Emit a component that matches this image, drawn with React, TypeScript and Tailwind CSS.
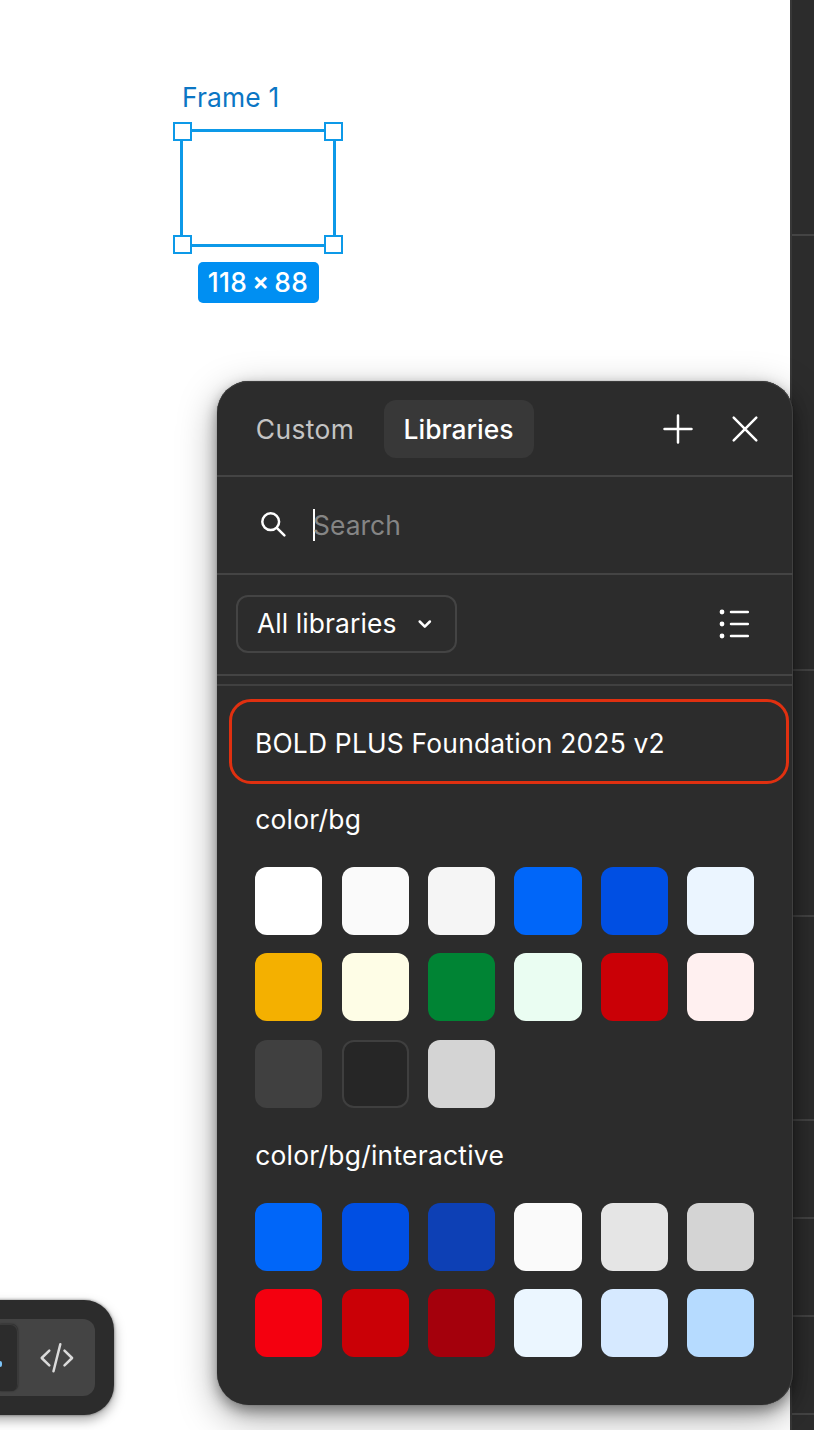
import type { ReactNode } from "react";

type Swatch = { name: string; className: string };

const groups: { title: string; swatches: Swatch[] }[] = [
  {
    title: "color/bg",
    swatches: [
      { name: "default", className: "bg-white" },
      { name: "subtle", className: "bg-[#fafafa]" },
      { name: "muted", className: "bg-[#f5f5f5]" },
      { name: "brand", className: "bg-[#0066f9]" },
      { name: "brand-strong", className: "bg-[#004fe3]" },
      { name: "brand-subtle", className: "bg-[#ebf5ff]" },
      { name: "warning", className: "bg-[#f4b000]" },
      { name: "warning-subtle", className: "bg-[#fefde6]" },
      { name: "success", className: "bg-[#008434]" },
      { name: "success-subtle", className: "bg-[#eafdf2]" },
      { name: "danger", className: "bg-[#ca0006]" },
      { name: "danger-subtle", className: "bg-[#fff0f0]" },
      { name: "inverse", className: "bg-[#404040]" },
      { name: "inverse-strong", className: "bg-[#262626] border-2 border-[#3f3f3f]" },
      { name: "disabled", className: "bg-[#d4d4d4]" },
    ],
  },
  {
    title: "color/bg/interactive",
    swatches: [
      { name: "primary", className: "bg-[#0066f9]" },
      { name: "primary-hover", className: "bg-[#004fe3]" },
      { name: "primary-pressed", className: "bg-[#0d40b5]" },
      { name: "secondary", className: "bg-[#fafafa]" },
      { name: "secondary-hover", className: "bg-[#e5e5e5]" },
      { name: "secondary-pressed", className: "bg-[#d4d4d4]" },
      { name: "danger", className: "bg-[#f4000f]" },
      { name: "danger-hover", className: "bg-[#ca0006]" },
      { name: "danger-pressed", className: "bg-[#a4000c]" },
      { name: "selected", className: "bg-[#ebf6ff]" },
      { name: "selected-hover", className: "bg-[#d6e9ff]" },
      { name: "selected-pressed", className: "bg-[#b6dbff]" },
    ],
  },
];

/* Heights of the inspector sections behind the picker */
const sections = [
  "h-[236px]",
  "h-[435px]",
  "h-[246px]",
  "h-[204px]",
  "h-[98px]",
  "h-[98px]",
  "h-[98px]",
];

function Icon({ children, className }: { children: ReactNode; className: string }) {
  return (
    <svg
      className={className}
      fill="none"
      stroke="currentColor"
      strokeWidth="2.5"
      strokeLinecap="round"
      strokeLinejoin="round"
      aria-hidden="true"
    >
      {children}
    </svg>
  );
}

function Handle({ className }: { className: string }) {
  return <span className={`absolute size-[19px] border-2 border-[#0d99e8] bg-white ${className}`} />;
}

/* Selected frame on the canvas */
function SelectedFrame() {
  return (
    <div className="absolute left-[180px] top-[81px] flex w-[156px] flex-col items-center">
      <span className="w-full pl-0.5 text-[26.4px] leading-8 tracking-[0.15px] text-[#0b76c4]">Frame 1</span>
      <div className="relative mt-4 h-[118px] w-full border-[3px] border-[#0d99e8]">
        <Handle className="-left-2.5 -top-2.5" />
        <Handle className="-right-2.5 -top-2.5" />
        <Handle className="-left-2.5 -bottom-2.5" />
        <Handle className="-right-2.5 -bottom-2.5" />
      </div>
      <span className="mt-[15px] flex h-[41px] w-[121px] items-center justify-center gap-[5px] rounded-[5px] bg-[#008ff2] text-[26.4px] font-medium tracking-[0.3px] whitespace-nowrap text-white">
        <span>118</span>
        <span className="pb-0.5 text-[25px] font-semibold">×</span>
        <span>88</span>
      </span>
    </div>
  );
}

function SwatchGroup({ title, swatches }: { title: string; swatches: Swatch[] }) {
  return (
    <section>
      <h3 className="flex h-[58px] items-center text-[26.4px] tracking-[0.25px]">{title}</h3>
      <div className="mt-[18px] grid grid-cols-[repeat(6,67.2px)] gap-x-[19.2px] gap-y-[18.4px]">
        {swatches.map((s) => (
          <button key={s.name} aria-label={s.name} className={`h-[68px] rounded-[12px] ${s.className}`} />
        ))}
      </div>
    </section>
  );
}

function ColorPicker() {
  return (
    <div className="absolute left-[217px] top-[381px] flex h-[1024px] w-[576px] flex-col overflow-hidden rounded-[32px] bg-[#2c2c2c] text-white shadow-[0_12px_38px_rgba(0,0,0,0.35),0_6px_14px_rgba(0,0,0,0.38),0_0_1px_rgba(0,0,0,0.5),inset_-1px_0_0_#404040,inset_0_1px_0_#3c3c3c]">
      <header className="flex h-24 shrink-0 items-center border-b-[2.4px] border-[#444444] pl-5 pt-0.5 text-[26.4px]">
        <button className="w-[136px] pt-0.5 text-center tracking-[0.4px] text-[#c4c4c4]">Custom</button>
        <button className="ml-[11px] flex h-[58px] w-[150px] items-center justify-center rounded-[12px] bg-[#383838] pr-px pt-0.5 font-medium">
          Libraries
        </button>
        <button className="ml-[129px]" aria-label="Add">
          <Icon className="size-[30px]">
            <path d="M15 1.5v27M1.5 15h27" />
          </Icon>
        </button>
        <button className="ml-[37px]" aria-label="Close">
          <Icon className="size-[30px]">
            <path d="m3.7 3.7 22.6 22.6m0-22.6-22.6 22.6" />
          </Icon>
        </button>
      </header>

      <div className="flex h-[98px] shrink-0 items-center border-b-2 border-[#444444] pl-[43px]">
        <Icon className="size-[28px]">
          <circle cx="10.7" cy="10.7" r="8.4" />
          <path d="m16.8 16.8 7.6 7.6" />
        </Icon>
        <span className="ml-[25px] h-8 w-0.5 bg-white" />
        <span className="-ml-0.5 pt-0.5 text-[26.4px] tracking-[0.05px] text-[#858585]">Search</span>
      </div>

      <div className="flex h-[101px] shrink-0 items-center justify-between border-b-2 border-[#444444] pb-0.5 pl-[19px] pr-[43px]">
        <button className="flex h-[58px] w-[221px] items-center rounded-[12px] border-2 border-[#444444] pl-[19px] text-[26.4px] tracking-[0.1px]">
          All libraries
          <Icon className="ml-[21px] size-4">
            <path d="m2.7 5.5 5.1 5.2 5.1-5.2" />
          </Icon>
        </button>
        <button aria-label="Show as list">
          <Icon className="h-[32px] w-[32px]">
            <path d="M13 4h16.8M13 16h16.8M13 28h16.8" />
            <path d="M4 4h.01M4 16h.01M4 28h.01" strokeWidth="4.8" />
          </Icon>
        </button>
      </div>

      <div className="mt-2 flex grow flex-col border-t-2 border-[#404040] pt-[13px]">
        <h2 className="ml-3 mr-1 flex h-[85px] shrink-0 items-center rounded-[22px] border-[3px] border-[#e03010] pt-[5px] pl-[23px] text-[26.4px] tracking-[0.2px]">
          BOLD PLUS Foundation 2025 v2
        </h2>
        <div className="flex flex-col gap-[19px] pl-[38.2px] pt-[7px]">
          {groups.map((g) => (
            <SwatchGroup key={g.title} {...g} />
          ))}
        </div>
      </div>
    </div>
  );
}

function Toolbar() {
  return (
    <div className="absolute -left-10 top-[1300px] flex h-[115px] w-[154px] items-center rounded-[30px] bg-[#2c2c2c] pl-10 shadow-[0_5px_12px_rgba(0,0,0,0.35),0_0_3px_rgba(0,0,0,0.5)]">
      <div className="flex h-[77px] w-[95px] items-center rounded-r-[12px] bg-[#444444]">
        <button
          aria-label="Design"
          className="flex h-[67px] w-[18px] items-center rounded-r-[7px] bg-[#2c2c2c] pt-3 shadow-[0_0_2px_rgba(0,0,0,0.5),inset_-1px_1px_0_#3a3a3a]"
        >
          <span className="h-[6px] w-[2px] rounded-r-full bg-[#7cc4f8]" />
        </button>
        <button aria-label="Dev mode" className="ml-[21px] text-[#dadada]">
          <Icon className="h-[32px] w-[36px]">
            <path d="m10.3 8.6-7.6 7.4 7.6 7.4M25.5 8.6l7.6 7.4-7.6 7.4M21.3 2.3l-6.8 27" />
          </Icon>
        </button>
      </div>
    </div>
  );
}

export default function App() {
  return (
    <main className="relative flex h-[1430px] w-[814px] justify-end overflow-hidden bg-white font-['Inter',sans-serif]">
      <aside className="w-6 border-l-2 border-[#383838] bg-[#2c2c2c]">
        {sections.map((h, i) => (
          <div key={i} className={`border-b-2 border-[#444444] ${h}`} />
        ))}
      </aside>
      <SelectedFrame />
      <Toolbar />
      <ColorPicker />
    </main>
  );
}
